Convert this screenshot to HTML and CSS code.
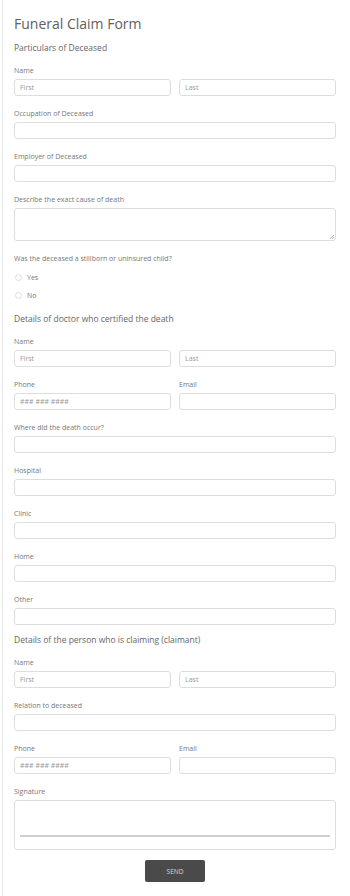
FILE: index.html
```html
<!DOCTYPE html>
<html lang="en">
<head>
    <meta charset="UTF-8">
    <meta name="viewport" content="width=device-width, initial-scale=1.0">
    <title>Funeral Claim Form</title>
    <link rel="stylesheet" href="styles.css">
</head>
<body>

    <form class="form-claim" id="claimForm">
        <h1>Funeral Claim Form</h1>

        <h3 class="secao">Particulars of Deceased</h3>
        <div class="grupo-input">
            <label>Name</label>
            <div class="linha-dupla">
                <input type="text" placeholder="First">
                <input type="text" placeholder="Last">
            </div>
        </div>
        <div class="grupo-input">
            <label for="occupation">Occupation of Deceased</label>
            <input type="text" id="occupation">
        </div>
        <div class="grupo-input">
            <label for="employer">Employer of Deceased</label>
            <input type="text" id="employer">
        </div>
        <div class="grupo-input">
            <label for="cause">Describe the exact cause of death</label>
            <div class="area">
                <textarea id="cause"></textarea>
            </div>
        </div>
        <div class="grupo-radio">
            <label>Was the deceased a stillborn or uninsured child?</label>
            <div class="opcao"><input type="radio" name="child" id="child-yes"><span>Yes</span></div>
            <div class="opcao"><input type="radio" name="child" id="child-no"><span>No</span></div>
        </div>

        <h3 class="secao">Details of doctor who certified the death</h3>
        <div class="grupo-input">
            <label>Name</label>
            <div class="linha-dupla">
                <input type="text" placeholder="First">
                <input type="text" placeholder="Last">
            </div>
        </div>
        <div class="grupo-input">
            <div class="linha-dupla">
                <div>
                    <label>Phone</label>
                    <input type="tel" placeholder="### ### ####">
                </div>
                <div>
                    <label>Email</label>
                    <input type="email">
                </div>
            </div>
        </div>
        <div class="grupo-input">
            <label for="where">Where did the death occur?</label>
            <input type="text" id="where">
        </div>
        <div class="grupo-input">
            <label for="hospital">Hospital</label>
            <input type="text" id="hospital">
        </div>
        <div class="grupo-input">
            <label for="clinic">Clinic</label>
            <input type="text" id="clinic">
        </div>
        <div class="grupo-input">
            <label for="home">Home</label>
            <input type="text" id="home">
        </div>
        <div class="grupo-input ultimo">
            <label for="other">Other</label>
            <input type="text" id="other">
        </div>

        <h3 class="secao">Details of the person who is claiming (claimant)</h3>
        <div class="grupo-input">
            <label>Name</label>
            <div class="linha-dupla">
                <input type="text" placeholder="First">
                <input type="text" placeholder="Last">
            </div>
        </div>
        <div class="grupo-input">
            <label for="relation">Relation to deceased</label>
            <input type="text" id="relation">
        </div>
        <div class="grupo-input">
            <div class="linha-dupla">
                <div>
                    <label>Phone</label>
                    <input type="tel" placeholder="### ### ####">
                </div>
                <div>
                    <label>Email</label>
                    <input type="email">
                </div>
            </div>
        </div>
        <div class="grupo-input">
            <label>Signature</label>
            <div class="assinatura"><div class="linha-assinatura"></div></div>
        </div>

        <div class="grupo-botoes">
            <button type="submit">SEND</button>
        </div>
    </form>

</body>
</html>
```

FILE: styles.css
```css
        html, body {
            margin: 0;
            background-color: #ffffff;
        }

        body {
            font-family: 'Open Sans', Arial, sans-serif;
            color: #777777;
        }

        .form-claim {
            margin-left: 2px;
            border-left: 1px solid #e8e8e8;
            padding: 15px 14px 14px 11px;
            min-height: 867px;
        }

        h1 {
            margin: 0;
            font-size: 14px;
            line-height: 18px;
            font-weight: 400;
            color: #606060;
        }

        .secao {
            margin: 9px 0 12px;
            font-size: 8.5px;
            line-height: 12px;
            font-weight: 400;
            color: #666666;
        }

        .grupo-input {
            margin-bottom: 13px;
        }

        .grupo-input.ultimo {
            margin-bottom: 0;
        }

        label {
            display: block;
            font-size: 7px;
            line-height: 10px;
            margin-bottom: 3px;
            color: #777777;
        }

        .linha-dupla {
            display: grid;
            grid-template-columns: 1fr 1fr;
            gap: 8px;
        }

        input[type="text"],
        input[type="tel"],
        input[type="email"],
        textarea {
            display: block;
            box-sizing: border-box;
            width: 100%;
            height: 17px;
            margin: 0;
            padding: 0 5px;
            border: 1px solid #dddddd;
            border-radius: 3px;
            background: #ffffff;
            font-family: 'Open Sans', Arial, sans-serif;
            font-size: 7px;
            color: #555555;
        }

        .area {
            position: relative;
        }

        textarea {
            height: 33px;
            resize: none;
        }

        /* alça de redimensionar, pequena como no original */
        .area::after {
            content: "";
            position: absolute;
            right: 2px;
            bottom: 2px;
            width: 4px;
            height: 4px;
            background: linear-gradient(135deg, transparent 45%, #bbbbbb 45%, #bbbbbb 55%, transparent 55%, transparent 75%, #bbbbbb 75%, #bbbbbb 85%, transparent 85%);
        }

        input::placeholder {
            color: #999999;
        }

        .grupo-radio label {
            margin-bottom: 4px;
        }

        .opcao {
            display: flex;
            align-items: center;
            height: 18px;
            font-size: 7px;
            color: #777777;
        }

        .opcao input[type="radio"] {
            appearance: none;
            width: 7px;
            height: 7px;
            margin: 0 5px 0 1px;
            border: 1px solid #dddddd;
            border-radius: 50%;
            background: #ffffff;
        }

        .assinatura {
            box-sizing: border-box;
            height: 50px;
            border: 1px solid #dddddd;
            border-radius: 3px;
            display: flex;
            align-items: flex-end;
            padding: 0 5px 12px;
        }

        .linha-assinatura {
            flex: 1;
            height: 2px;
            background-color: #d0d0d0;
        }

        .grupo-botoes {
            display: flex;
            justify-content: center;
            margin-top: -3px;
        }

        button {
            width: 60px;
            height: 22px;
            border: none;
            border-radius: 2px;
            background-color: #4a4a4a;
            color: #d8d8d8;
            font-family: 'Open Sans', Arial, sans-serif;
            font-size: 6.5px;
            cursor: pointer;
        }
```
